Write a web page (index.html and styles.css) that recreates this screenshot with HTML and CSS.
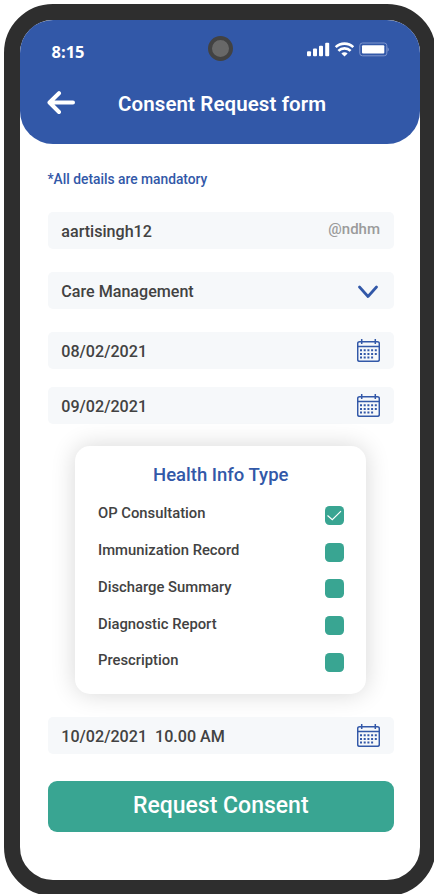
FILE: index.html
```html
<!DOCTYPE html>
<html lang="en">
<head>
<meta charset="utf-8">
<title>Consent Request form</title>
<link rel="stylesheet" href="styles.css">
</head>
<body>
<svg class="defs" width="0" height="0" aria-hidden="true">
  <symbol id="calendar" viewBox="0 0 23 23">
    <rect x=".7" y="2.7" width="21.6" height="19.6" rx="1.8" fill="none" stroke="currentColor" stroke-width="1.5"/>
    <path d="M.7 7.5h21.6M4.7 0v5M18.3 0v5" fill="none" stroke="currentColor" stroke-width="1.5"/>
    <path d="M3 11.3h17M3 14.9h17M3 18.4h13.3" fill="none" stroke="currentColor" stroke-width="2" stroke-dasharray="2 1.7"/>
  </symbol>
</svg>
<div class="phone">
  <header class="header">
    <div class="status">
      <span class="time">8:15</span>
      <span class="camera"></span>
      <svg class="indicators" width="84" height="16" viewBox="0 0 84 16">
        <g fill="#fff">
          <rect x="0" y="9.3" width="4" height="5" rx="1"/>
          <rect x="6" y="6.5" width="4" height="7.8" rx="1"/>
          <rect x="12" y="3.7" width="4" height="10.6" rx="1"/>
          <rect x="18.2" y=".7" width="4" height="13.6" rx="1"/>
          <path d="M34.4 11.5a4.3 4.3 0 0 1 6.2 0L37.5 14.4z"/>
          <rect x="55" y="3.2" width="22.3" height="8.4" rx="1"/>
        </g>
        <path d="M28.7 5.2a12.5 12.5 0 0 1 17.6 0M31.4 8.9a8.6 8.6 0 0 1 12.2 0" fill="none" stroke="#fff" stroke-width="2.6"/>
        <rect x="52.8" y="1" width="27" height="12.8" rx="2.6" fill="none" stroke="#7f96cd"/>
        <path d="M80.5 5.2c1.8.7 1.8 3.8 0 4.5z" fill="#7f96cd"/>
      </svg>
    </div>
    <div class="titlebar">
      <svg class="back" width="28" height="24" viewBox="0 0 28 24"><path d="M12 2.2 2.5 11.5 12 21M3 11.5h23" fill="none" stroke="#fff" stroke-width="4" stroke-linecap="round" stroke-linejoin="round"/></svg>
      <h1 class="title">Consent Request form</h1>
    </div>
  </header>
  <main class="form">
    <p class="note">*All details are mandatory</p>
    <div class="field"><span>aartisingh12</span><span class="suffix">@ndhm</span></div>
    <div class="field field-select"><span>Care Management</span><svg class="chevron" width="20" height="14" viewBox="0 0 20 14"><path d="m1.5 2 8.500 9.500L18.500 2" fill="none" stroke="currentColor" stroke-width="2.7" stroke-linecap="round" stroke-linejoin="round"/></svg></div>
    <div class="field field-from"><span class="date">08/02/2021</span><svg class="calendar"><use href="#calendar"/></svg></div>
    <div class="field field-to"><span class="date">09/02/2021</span><svg class="calendar"><use href="#calendar"/></svg></div>
    <section class="card">
      <h2 class="card-title">Health Info Type</h2>
      <ul class="types">
        <li class="type"><span>OP Consultation</span><i class="box"><svg width="19" height="19" viewBox="0 0 19 19"><path d="m2.5 9.5 4.8 4.1 8.7-8.5" fill="none" stroke="#fff" stroke-width="1.2"/></svg></i></li>
        <li class="type"><span>Immunization Record</span><i class="box"></i></li>
        <li class="type"><span>Discharge Summary</span><i class="box"></i></li>
        <li class="type"><span>Diagnostic Report</span><i class="box"></i></li>
        <li class="type"><span>Prescription</span><i class="box"></i></li>
      </ul>
    </section>
    <div class="field field-expiry"><span class="date">10/02/2021&nbsp; 10.00 AM</span><svg class="calendar"><use href="#calendar"/></svg></div>
    <button class="submit">Request Consent</button>
  </main>
</div>
</body>
</html>
```
FILE: styles.css
```css
* { box-sizing: border-box; }
html, body { height: 100%; }
body { margin: 0; background: #fff; overflow: hidden; font-family: Roboto, "Liberation Sans", sans-serif; color: #424242; }
h1, h2, p, ul { margin: 0; padding: 0; }
.defs { display: block; }
.phone { width: 432px; height: 892px; margin: 4px 0 0 4px; border: 16px solid #2e2e2e; border-radius: 49px; background: #fff; overflow: hidden; }
.header { height: 123.6px; background: #3258a8; border-radius: 0 0 33px 33px; color: #fff; }
.status { display: grid; grid-template-columns: 172px 57px 1fr; align-items: center; height: 56px; padding-left: 16px; }
.time { padding: 8px 0 0 15.5px; font: 700 16.5px/22px "Open Sans", sans-serif; }
.camera { width: 25px; height: 25px; border: 4px solid #424242; border-radius: 50%; background: #686868; }
.indicators { margin: 3px 0 0 41.5px; }
.titlebar { display: flex; align-items: flex-start; padding: 15px 0 0 27px; }
.title { margin: 1px 0 0 43px; font-size: 20.5px; line-height: 24px; font-weight: 600; letter-spacing: .1px; white-space: nowrap; }
.form { display: flex; flex-direction: column; padding: 26.4px 26px 0 27.5px; }
.note { height: 42.5px; font-size: 13.8px; line-height: 18px; font-weight: 500; color: #3258a8; }
.field { display: flex; flex: none; justify-content: space-between; align-items: center; width: 346.5px; height: 37px; padding: 0 14px 0 13.8px; border-radius: 5px; background: #f6f8fa; font-size: 16.1px; line-height: 20px; font-weight: 500; }
.field > span:first-child { padding-top: 3px; }
.field > span:first-child:not(.date) { padding-top: 2px; }
.field-select > span:first-child:not(.date) { padding-top: 3px; }
.suffix { margin-bottom: 4px; font-size: 15px; font-weight: 500; color: #9b9b9b; }
.field-select { margin-top: 22.5px; }
.chevron { margin: 3px 2px 0 0; color: #3258a8; }
.field-from { margin-top: 23px; }
.field-to { margin-top: 18px; }
.calendar { width: 23px; height: 23px; color: #3258a8; }
.card { flex: none; width: 291px; height: 248px; margin: 22.5px 0 0 27.5px; padding: 18px 22.5px 0 23px; border-radius: 15px; background: #fff; box-shadow: 0 0 24px rgba(0, 0, 0, .16); }
.card-title { font-size: 18.5px; line-height: 22px; font-weight: 500; text-align: center; color: #3258a8; }
.types { margin-top: 18px; list-style: none; }
.type { display: flex; justify-content: space-between; height: 36.7px; font-size: 14.8px; line-height: 18px; font-weight: 500; }
.box { width: 19px; height: 19px; margin-top: 1.5px; border-radius: 4.5px; background: #39a592; }
.box svg { display: block; }
.field-expiry { position: relative; margin-top: 22.5px; }
.submit { width: 346.5px; height: 50.5px; margin-top: 27.5px; padding: 0 0 2px; border: 0; border-radius: 9px; background: #39a592; color: #fff; font: 500 23px/28px Roboto, sans-serif; }
```
